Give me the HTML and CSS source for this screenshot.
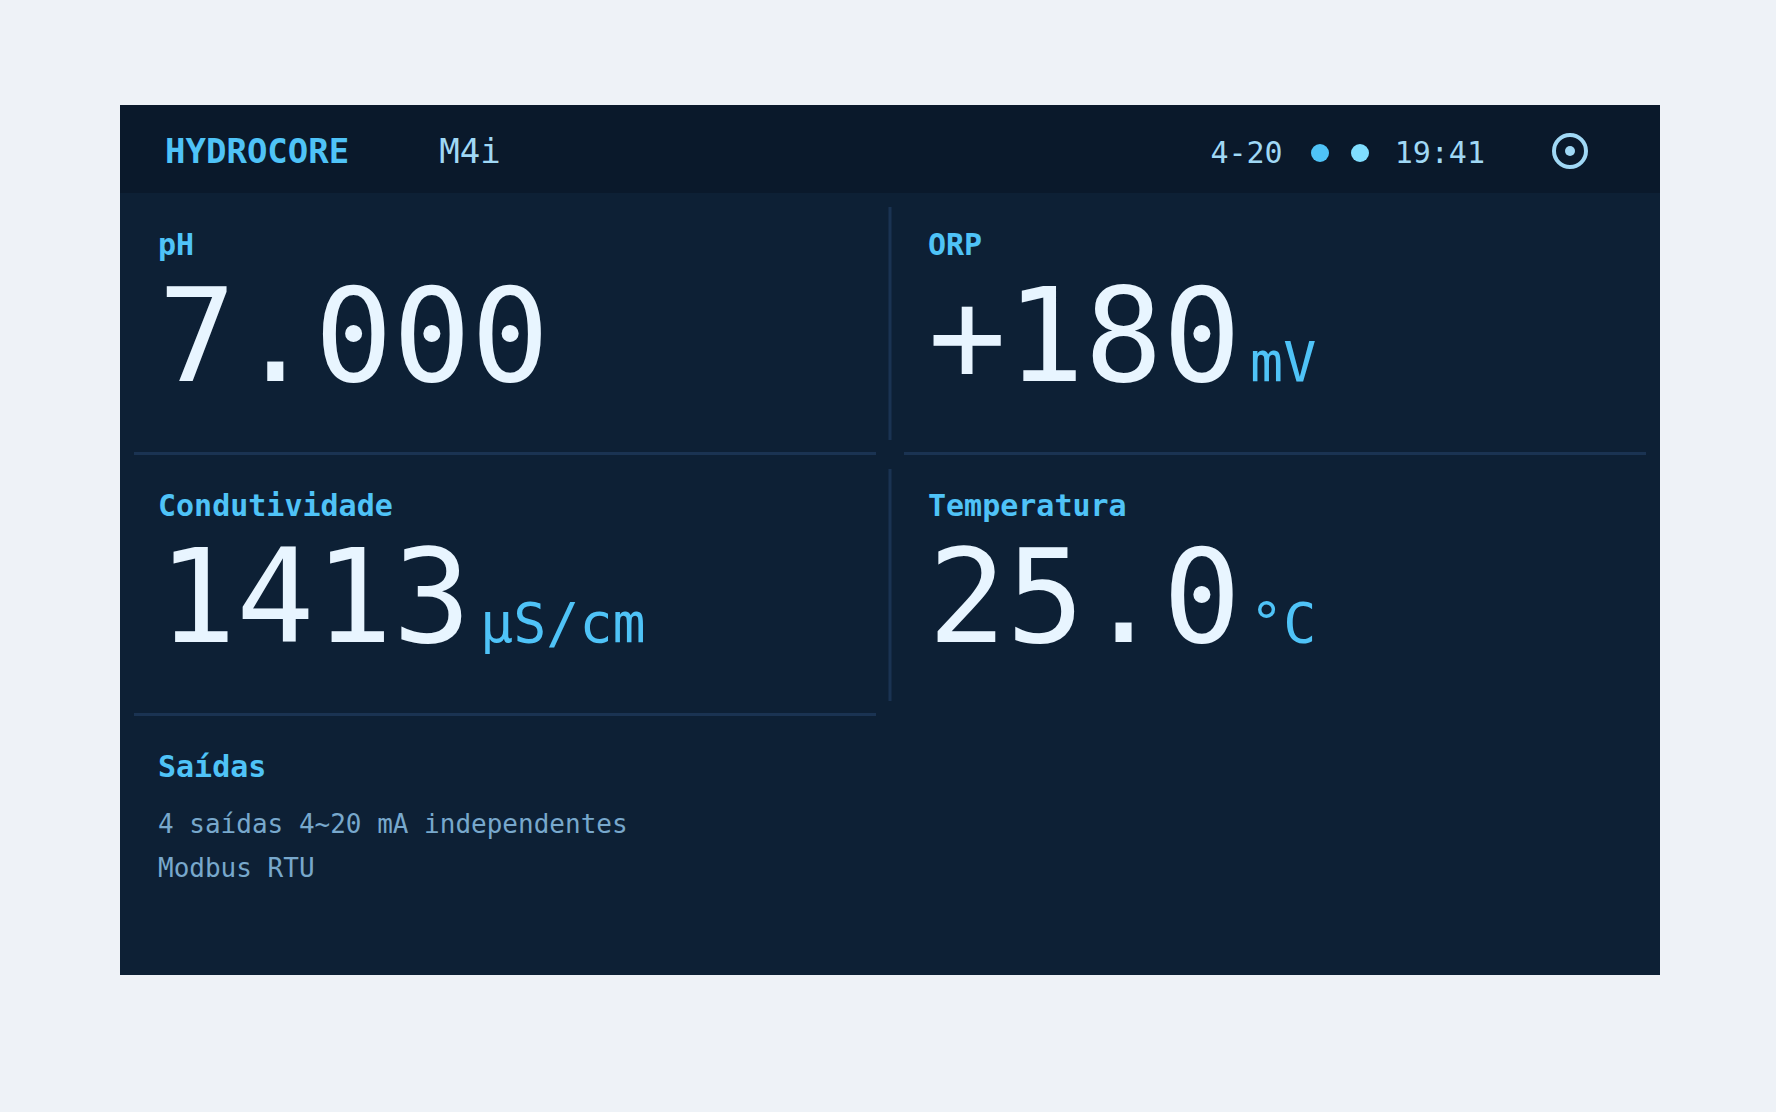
FILE: index.html
```html
<!DOCTYPE html>
<html lang="pt">
<head>
  <meta charset="utf-8">
  <meta name="viewport" content="width=device-width, initial-scale=1">
  <title>HYDROCORE M4i</title>
  <link rel="stylesheet" href="styles.css">
</head>
<body>
  <main class="panel">
    <header class="topbar">
      <h1 class="brand">HYDROCORE</h1>
      <span class="model">M4i</span>
      <div class="status">
        <span class="loop">4-20</span>
        <span class="dots"><span class="dot"></span><span class="dot dot-light"></span></span>
        <time class="clock">19:41</time>
      </div>
      <svg class="target" viewBox="0 0 36 36" aria-hidden="true">
        <circle cx="18" cy="18" r="16" fill="none" stroke="currentColor" stroke-width="4"/>
        <circle cx="18" cy="18" r="5" fill="currentColor"/>
      </svg>
    </header>

    <div class="readings">
      <section class="cell cell-top">
        <h2 class="label">pH</h2>
        <p class="reading"><span class="value">7.000</span></p>
      </section>
      <div class="divider-v"></div>
      <section class="cell cell-top cell-right">
        <h2 class="label">ORP</h2>
        <p class="reading"><span class="value">+180</span><span class="unit">mV</span></p>
      </section>

      <div class="divider-h"></div>
      <div></div>
      <div class="divider-h divider-right"></div>

      <section class="cell">
        <h2 class="label">Condutividade</h2>
        <p class="reading"><span class="value">1413</span><span class="unit">µS/cm</span></p>
      </section>
      <div class="divider-v"></div>
      <section class="cell cell-right">
        <h2 class="label">Temperatura</h2>
        <p class="reading"><span class="value">25.0</span><span class="unit">°C</span></p>
      </section>

      <div class="divider-h"></div>
      <div></div>
      <div></div>

      <section class="cell">
        <h2 class="label">Saídas</h2>
        <p class="details">4 saídas 4~20 mA independentes<br>Modbus RTU</p>
      </section>
    </div>
  </main>
</body>
</html>
```
FILE: styles.css
```css
:root {
  --page: #eef2f7;
  --panel: #0d2035;
  --topbar: #0a192b;
  --line: #1a3352;
  --accent: #4fc3f7;
  --soft: #a0d8f5;
  --bright: #e8f5ff;
  --muted: #78a8cc;
}

* {
  box-sizing: border-box;
}

body {
  margin: 0;
  min-height: 100vh;
  padding: 105px 116px 137px 120px;
  display: flex;
  background: var(--page);
  font-family: "DejaVu Sans Mono", monospace;
}

h1, h2, p {
  margin: 0;
}

.panel {
  flex: 1;
  display: flex;
  flex-direction: column;
  background: var(--panel);
}

.topbar {
  display: flex;
  align-items: center;
  padding: 24px 72px 20px 45px;
  background: var(--topbar);
  color: var(--soft);
  font-size: 34px;
  line-height: 44px;
}

.brand {
  margin-right: 90px;
  color: var(--accent);
  font-size: 34px;
  font-weight: 700;
}

.status {
  display: flex;
  align-items: center;
  margin-left: auto;
  padding-top: 4px;
  font-size: 30px;
  line-height: 36px;
}

.dots {
  display: flex;
  gap: 22px;
  margin: 0 26px 0 28px;
}

.dot {
  width: 18px;
  height: 18px;
  border-radius: 50%;
  background: var(--accent);
}

.dot-light {
  background: #80deff;
}

.target {
  width: 36px;
  height: 36px;
  margin-left: 67px;
}

.readings {
  flex: 1;
  display: grid;
  grid-template-columns: minmax(0, 1fr) 4px minmax(0, 1fr);
  grid-template-rows: 1fr 3px 1fr 3px 1fr;
}

.cell {
  padding: 33px 36px 0 38px;
}

.cell-top {
  padding-top: 34px;
}

.cell-right {
  padding-left: 36px;
}

.divider-v {
  margin: 14px 0 12px;
  border: solid #132944;
  border-width: 0 1px;
  background: var(--line);
}

.divider-h {
  margin: 0 12px 0 14px;
  background: var(--line);
}

.divider-right {
  margin: 0 14px 0 12px;
}

.label {
  color: var(--accent);
  font-size: 30px;
  font-weight: 700;
  line-height: 36px;
}

.reading {
  display: flex;
  align-items: baseline;
  gap: 9px;
  line-height: 146px;
}

.value {
  color: var(--bright);
  font-size: 130px;
}

.unit {
  color: var(--accent);
  font-size: 55px;
}

.details {
  margin-top: 17px;
  color: var(--muted);
  font-size: 26px;
  line-height: 44px;
}
```
